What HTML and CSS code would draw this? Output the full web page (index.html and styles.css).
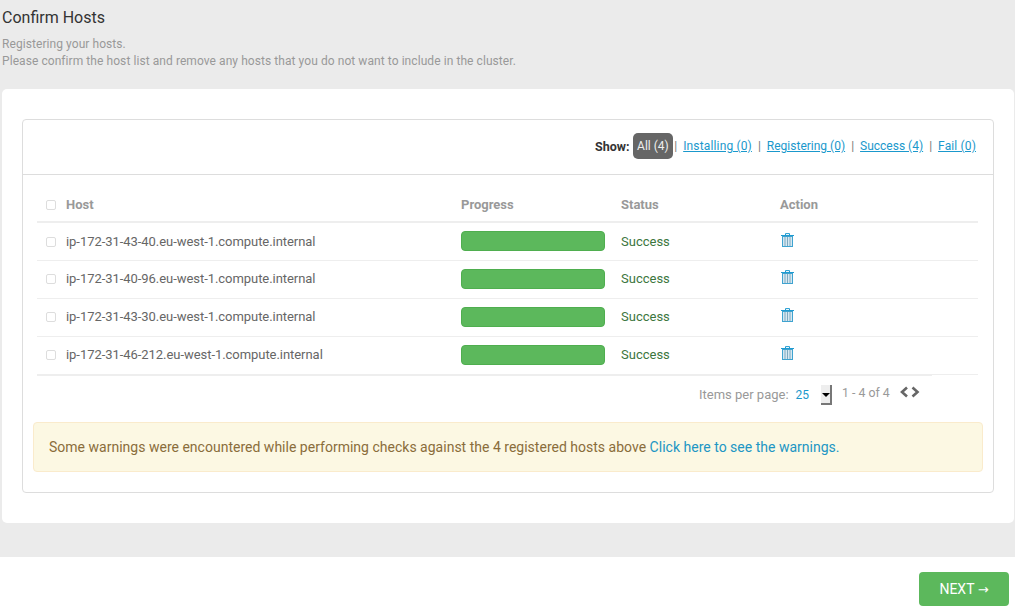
FILE: index.html
```html
<!DOCTYPE html>
<html lang="en">
<head>
  <meta charset="UTF-8">
  <meta name="viewport" content="width=device-width, initial-scale=1.0">
  <title>Confirm Hosts</title>
  <link rel="stylesheet" href="styles.css">
</head>
<body>
  <svg class="sprite" width="0" height="0">
    <symbol id="trash" viewBox="0 0 13 14">
      <path d="M0 2.5h13M4.5 2.5V0.6h4v1.9" fill="none" stroke="#1f9bd1" stroke-width="1"/>
      <rect x="1.5" y="3.5" width="10" height="10" fill="#d5e8f2" stroke="#3fa3d0"/>
      <path d="M4 4v9M6.5 4v9M9 4v9" stroke="#7fa9c0" stroke-width="1"/>
    </symbol>
  </svg>

  <main class="wizard">
    <h1>Confirm Hosts</h1>
    <p class="intro">Registering your hosts.<br>Please confirm the host list and remove any hosts that you do not want to include in the cluster.</p>

    <section class="card">
      <div class="box">
        <div class="filters">
          <strong>Show:</strong>
          <span class="pill">All (4)</span>
          <span class="sep sep-first">|</span>
          <a class="wide" href="#">Installing (0)</a>
          <span class="sep">|</span>
          <a href="#">Registering (0)</a>
          <span class="sep">|</span>
          <a href="#">Success (4)</a>
          <span class="sep">|</span>
          <a class="wide-end" href="#">Fail (0)</a>
        </div>

        <div class="box-body">
          <table class="hosts">
            <thead>
              <tr>
                <th class="col-host"><span class="check"></span>Host</th>
                <th class="col-progress">Progress</th>
                <th class="col-status">Status</th>
                <th>Action</th>
              </tr>
            </thead>
            <tbody>
              <tr>
                <td class="host"><span class="check"></span>ip-172-31-43-40.eu-west-1.compute.internal</td>
                <td class="bar-cell"><div class="bar"></div></td>
                <td class="ok">Success</td>
                <td><svg class="trash" width="13" height="14"><use href="#trash"/></svg></td>
              </tr>
              <tr>
                <td class="host"><span class="check"></span>ip-172-31-40-96.eu-west-1.compute.internal</td>
                <td class="bar-cell"><div class="bar"></div></td>
                <td class="ok">Success</td>
                <td><svg class="trash" width="13" height="14"><use href="#trash"/></svg></td>
              </tr>
              <tr>
                <td class="host"><span class="check"></span>ip-172-31-43-30.eu-west-1.compute.internal</td>
                <td class="bar-cell"><div class="bar"></div></td>
                <td class="ok">Success</td>
                <td><svg class="trash" width="13" height="14"><use href="#trash"/></svg></td>
              </tr>
              <tr>
                <td class="host"><span class="check"></span>ip-172-31-46-212.eu-west-1.compute.internal</td>
                <td class="bar-cell"><div class="bar"></div></td>
                <td class="ok">Success</td>
                <td><svg class="trash" width="13" height="14"><use href="#trash"/></svg></td>
              </tr>
            </tbody>
          </table>
          <div class="table-end"></div>

          <div class="pager">
            <span class="pager-label">Items per page:</span>
            <span class="pager-value">25</span>
            <span class="pager-arrow"></span>
            <span class="pager-range">1 - 4 of 4</span>
            <svg class="chevrons" width="20" height="12" viewBox="0 0 20 12">
              <path d="M7 1.5 2 6 7 10.5M12.5 1.5 17.5 6 12.5 10.5" fill="none" stroke="#666" stroke-width="2.6"/>
            </svg>
          </div>

          <div class="alert">Some warnings were encountered while performing checks against the 4 registered hosts above <a href="#">Click here to see the warnings.</a></div>
        </div>
      </div>
    </section>
  </main>

  <footer class="actions">
    <button type="button" class="next">NEXT <span class="arrow">&rarr;</span></button>
  </footer>
</body>
</html>
```

FILE: styles.css
```css
html, body {
  height: 100%;
}

body {
  margin: 0;
  display: flex;
  flex-direction: column;
  background-color: #ebebeb;
  font-family: Roboto, "Liberation Sans", sans-serif;
  font-size: 13px;
  color: #666;
  overflow: hidden;
}

.sprite {
  position: absolute;
}

.wizard {
  flex: 1;
  padding: 8px 1px 0 2px;
}

h1 {
  margin: 0;
  font-size: 16px;
  font-weight: 400;
  line-height: 19px;
  color: #333;
}

.intro {
  margin: 9px 0 0;
  font-size: 12px;
  line-height: 17px;
  letter-spacing: 0.07px;
  color: #999;
}

.card {
  margin-top: 19px;
  padding: 30px 20px;
  background: #fff;
  border-radius: 5px;
}

.box {
  border: 1px solid #ddd;
  border-radius: 4px;
}

.filters {
  display: flex;
  justify-content: flex-end;
  align-items: center;
  height: 52px;
  padding: 0 17px 2px 0;
  border-bottom: 1px solid #ddd;
  font-size: 12px;
  color: #666;
}

.filters strong {
  color: #333;
  font-size: 12.5px;
  font-weight: 700;
  margin-right: 3px;
}

.filters a {
  color: #1a98cc;
}

.filters a.wide {
  letter-spacing: 0.15px;
}

.filters a.wide-end {
  letter-spacing: 0.14px;
}

.pill {
  padding: 0 4.5px;
  height: 26px;
  line-height: 26px;
  color: #eee;
  background: #666;
  border-radius: 5px;
}

.sep {
  margin: 0 6px;
  color: #777;
}

.sep-first {
  margin: 0 6px 0 1px;
}

.box-body {
  padding: 11px 10px 20px;
}

.hosts {
  width: 941px;
  margin-left: 4px;
  border-collapse: collapse;
  table-layout: fixed;
}

.hosts th {
  height: 33px;
  padding: 2px 0 0;
  text-align: left;
  font-size: 13px;
  font-weight: 700;
  color: #999;
  border-bottom: 2px solid #eee;
}

.hosts td {
  height: 37px;
  padding: 0;
  border-bottom: 1px solid #eee;
  line-height: 16px;
  color: #666;
}

/* rows after the first sit a pixel higher */
.hosts tr + tr td,
.hosts td.bar-cell {
  height: 36px;
  padding-bottom: 1px;
}

.hosts td.host {
  letter-spacing: -0.05px;
}

.col-host {
  width: 424px;
}

.col-progress {
  width: 160px;
}

.col-status {
  width: 159px;
}

.check {
  display: inline-block;
  width: 8px;
  height: 8px;
  margin: 0 10px 0 9px;
  border: 1px solid #ddd;
  border-radius: 2px;
  vertical-align: -1px;
}

.bar {
  width: 144px;
  height: 20px;
  box-sizing: border-box;
  background: #5cb85c;
  border: 1px solid #4fae4f;
  border-radius: 4px;
}

.hosts td.ok {
  color: #3c763d;
}

.trash {
  display: block;
  margin: -4px 0 0 1px;
}

.table-end {
  width: 895px;
  height: 1px;
  margin-left: 4px;
  background: #eee;
}

.pager {
  display: flex;
  align-items: center;
  height: 35px;
  padding: 1px 0 0 666px;
  font-size: 13px;
  color: #999;
}

.pager-value {
  margin-left: 7px;
  color: #1a98cc;
  font-size: 12px;
}

.pager-arrow {
  position: relative;
  width: 9px;
  height: 18px;
  margin-left: 12px;
  background: #eee;
  border-right: 2px solid #777;
  border-bottom: 2px solid #777;
}

.pager-arrow::after {
  content: "";
  position: absolute;
  top: 8px;
  left: 1px;
  border: 4px solid transparent;
  border-top: 4px solid #000;
  border-bottom: 0;
}

.pager-range {
  margin: 0 0 4px 10px;
  font-size: 12.3px;
}

.chevrons {
  margin: 0 0 5px 10px;
}

.alert {
  margin-top: 10px;
  height: 48px;
  padding-left: 15px;
  line-height: 48px;
  font-size: 14px;
  letter-spacing: 0.01px;
  color: #8a6d3b;
  background: #fcf8e3;
  border: 1px solid #faebcc;
  border-radius: 4px;
}

.alert a {
  color: #2196c4;
  text-decoration: none;
}

.actions {
  display: flex;
  justify-content: flex-end;
  align-items: flex-start;
  height: 41px;
  padding: 15px 6px 0 0;
  background: #fff;
}

.next {
  width: 90px;
  height: 34px;
  padding: 0;
  border: none;
  border-radius: 4px;
  background: #5cb85c;
  color: #fff;
  font-family: inherit;
  font-size: 14px;
}

.arrow {
  font-family: "DejaVu Sans", sans-serif;
  font-size: 13px;
}
```
